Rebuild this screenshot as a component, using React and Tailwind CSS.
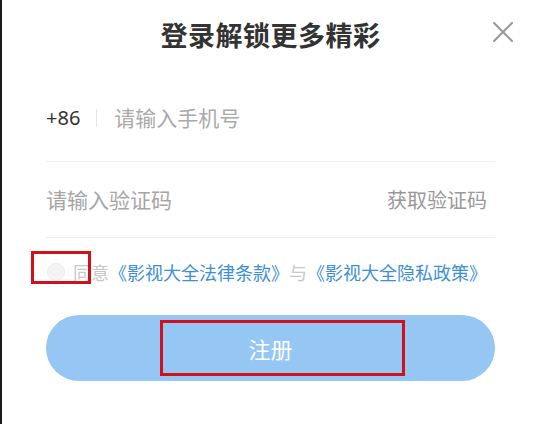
import { X } from 'lucide-react'

const cjk = { fontFamily: '"Noto Sans CJK SC", "Noto Sans", sans-serif' }

export default function App() {
  return (
    <div
      className="relative h-[424px] w-[539px] overflow-hidden border-l-2 border-[#1a1a1a] bg-white"
      style={cjk}
    >
      <div className="flex h-[68px] items-center justify-center pt-[1px]">
        <h1 className="text-[27px] font-bold leading-none tracking-[0.5px] text-[#333]">
          登录解锁更多精彩
        </h1>
        <button type="button" className="absolute left-[483px] top-[14px] text-[#9a9a9a]">
          <X className="h-[36px] w-[36px]" strokeWidth={1.4} />
        </button>
      </div>

      <div className="px-[44px]">
        <div className="flex h-[94px] items-center border-b border-[#f0f0f0] pt-[6px]">
          <span className="text-[20px] leading-none text-[#333]" style={{ fontFamily: '"Noto Sans", sans-serif' }}>
            +86
          </span>
          <span className="ml-[16px] mr-[17px] h-[18px] w-px bg-[#e6e6e6]" />
          <span className="text-[21px] leading-none text-[#aaa]">请输入手机号</span>
        </div>

        <div className="flex h-[76px] items-center justify-between border-b border-[#f0f0f0] pr-[8px]">
          <span className="text-[21px] leading-none text-[#a6a6a6]">请输入验证码</span>
          <span className="text-[20px] leading-none text-[#999]">获取验证码</span>
        </div>

        <div className="flex h-[68px] items-center pl-[1px] text-[18px] leading-none">
          <span className="mr-[8px] h-[18px] w-[18px] rounded-full border border-[#eee] bg-[#f4f4f4]" />
          <span className="text-[#c8c8c8]">同意</span>
          <span className="text-[#3d8fd8]">《影视大全法律条款》</span>
          <span className="text-[#c8c8c8]">与</span>
          <span className="text-[#3d8fd8]">《影视大全隐私政策》</span>
        </div>

        <button
          type="button"
          className="mt-[9px] flex h-[66px] w-full items-center justify-center rounded-full bg-[#95c6f4] text-[22px] leading-none text-white"
        >
          注册
        </button>
      </div>

      <div className="pointer-events-none absolute left-[29px] top-[251px] h-[33px] w-[60px] border-[3px] border-[#d0101b]" />
      <div className="pointer-events-none absolute left-[158px] top-[320px] h-[56px] w-[245px] border-[3px] border-[#d0101b]" />
    </div>
  )
}
